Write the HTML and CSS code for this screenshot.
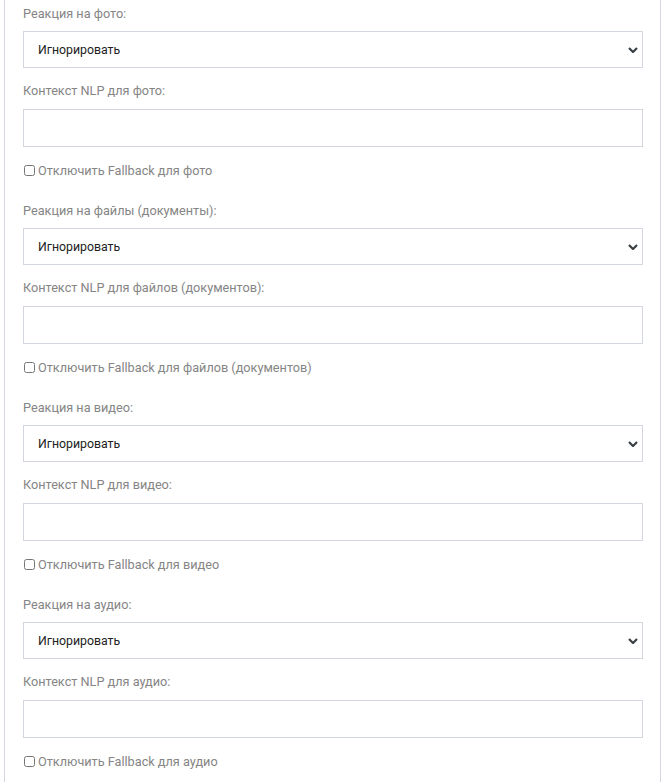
FILE: index.html
```html
<!DOCTYPE html>
<html lang="ru">
<head>
<meta charset="utf-8">
<link rel="stylesheet" href="styles.css">
</head>
<body>
<div class="panel">
  <div class="section">
    <label class="lbl">Реакция на фото:</label>
    <div class="select"><span>Игнорировать</span><svg class="chev" viewBox="0 0 10 6" width="10" height="6"><path d="M1 1l4 4 4-4" fill="none" stroke="#3a3f44" stroke-width="2.2"/></svg></div>
    <label class="lbl lbl2">Контекст NLP для фото:</label>
    <div class="input"></div>
    <label class="check"><input type="checkbox"> Отключить Fallback для фото</label>
  </div>
  <div class="section">
    <label class="lbl">Реакция на файлы (документы):</label>
    <div class="select"><span>Игнорировать</span><svg class="chev" viewBox="0 0 10 6" width="10" height="6"><path d="M1 1l4 4 4-4" fill="none" stroke="#3a3f44" stroke-width="2.2"/></svg></div>
    <label class="lbl lbl2">Контекст NLP для файлов (документов):</label>
    <div class="input"></div>
    <label class="check"><input type="checkbox"> Отключить Fallback для файлов (документов)</label>
  </div>
  <div class="section">
    <label class="lbl">Реакция на видео:</label>
    <div class="select"><span>Игнорировать</span><svg class="chev" viewBox="0 0 10 6" width="10" height="6"><path d="M1 1l4 4 4-4" fill="none" stroke="#3a3f44" stroke-width="2.2"/></svg></div>
    <label class="lbl lbl2">Контекст NLP для видео:</label>
    <div class="input"></div>
    <label class="check"><input type="checkbox"> Отключить Fallback для видео</label>
  </div>
  <div class="section">
    <label class="lbl">Реакция на аудио:</label>
    <div class="select"><span>Игнорировать</span><svg class="chev" viewBox="0 0 10 6" width="10" height="6"><path d="M1 1l4 4 4-4" fill="none" stroke="#3a3f44" stroke-width="2.2"/></svg></div>
    <label class="lbl lbl2">Контекст NLP для аудио:</label>
    <div class="input"></div>
    <label class="check"><input type="checkbox"> Отключить Fallback для аудио</label>
  </div>
</div>
</body>
</html>
```
FILE: styles.css
```css
html, body { margin: 0; padding: 0; background: #fff; }
body { font-family: Roboto, "Liberation Sans", sans-serif; font-size: 12.7px; }
.panel {
  margin-left: 4px;
  min-height: 782px;
  border-left: 1px solid #d2d6de;
  border-right: 1px solid #d2d6de;
  padding: 5px 17px 0 18px;
  box-sizing: content-box;
  width: 620px;
}
.section { display: flex; flex-direction: column; height: 197px; }
.lbl { display: block; color: #858585; line-height: 18px; height: 18px; margin-bottom: 8px; }
.lbl2 { margin-top: 14px; margin-bottom: 9px; }
.select {
  height: 37px; box-sizing: border-box; border: 1px solid #d2d6de;
  display: flex; align-items: center; justify-content: space-between;
  padding: 0 4px 0 14px; color: #222; font-size: 12.3px;
}
.chev { display: block; }
.input { height: 38px; box-sizing: border-box; border: 1px solid #d2d6de; }
.check { display: flex; align-items: center; color: #858585; margin-top: 17px; height: 13px; }
.check input { margin: 0 3px 0 1px; width: 11px; height: 11px; }
```
